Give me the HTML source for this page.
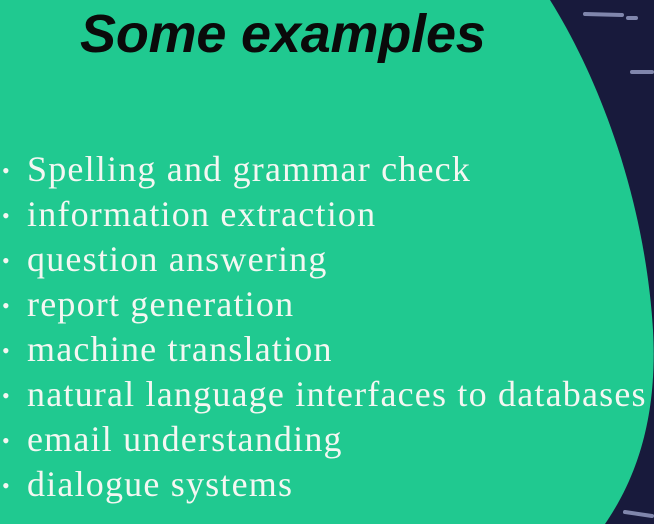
<!DOCTYPE html>
<html><head><style>
body{margin:0;width:654px;height:524px;overflow:hidden;background:#181a3c;position:relative;font-family:"Liberation Serif",serif}
svg{position:absolute;left:0;top:0}
h1{position:absolute;left:80px;top:3px;margin:0;font:italic bold 54px "Liberation Sans",sans-serif;color:#0a0a0a;letter-spacing:-0.2px}
ul{position:absolute;left:0;top:147px;margin:0;padding:0;list-style:none;color:#f4f7f2;font-size:36px;line-height:45px;letter-spacing:1.2px}
li{white-space:nowrap;height:45px;overflow:visible}
li:before{content:"•";display:inline-block;width:25px;padding-left:2px;font-size:22px;line-height:20px;vertical-align:3px;letter-spacing:0}
</style></head><body>
<svg width="654" height="524">
<path d="M0,0 L550,0 C600,80 645,200 653,330 C658,420 635,480 605,524 L0,524 Z" fill="#20c990"/>
<g stroke="#9aa2c8" stroke-width="4" stroke-linecap="round" opacity=".8">
<line x1="585" y1="14" x2="622" y2="15"/><line x1="632" y1="72" x2="652" y2="72"/><line x1="628" y1="18" x2="636" y2="18"/>
<line x1="625" y1="512" x2="652" y2="516"/>
</g>
</svg>
<h1>Some examples</h1>
<ul>
<li>Spelling and grammar check</li>
<li>information extraction</li>
<li>question answering</li>
<li>report generation</li>
<li>machine translation</li>
<li>natural language interfaces to databases</li>
<li>email understanding</li>
<li>dialogue systems</li>
</ul>
</body></html>
